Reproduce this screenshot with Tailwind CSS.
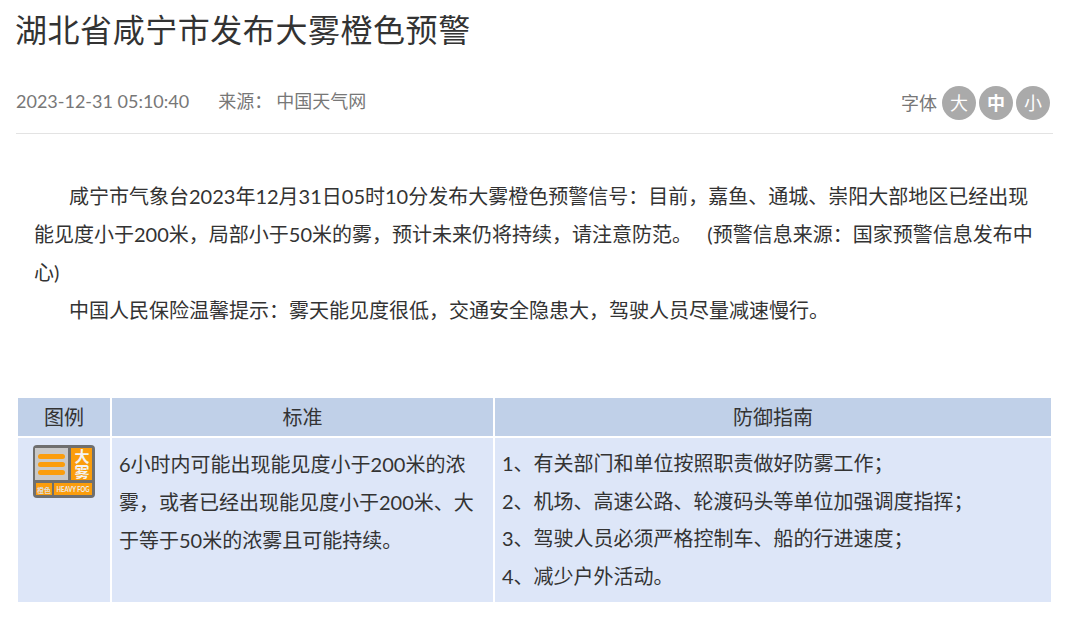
<!DOCTYPE html>
<html lang="zh-CN">
<head>
    <meta charset="UTF-8">
    <title>湖北省咸宁市发布大雾橙色预警</title>
    <script src="https://cdn.jsdelivr.net/npm/@tailwindcss/browser@4"></script>
</head>
<body class="bg-white font-['Lato','Noto_Sans_CJK_SC',sans-serif] overflow-hidden">
    <div class="w-[1076px] h-[625px] pl-[16px] pr-[23px]">
        <h1 class="text-[32px] leading-[32px] pt-[14px] -ml-[1px] text-[#333] font-normal tracking-[0.55px]">湖北省咸宁市发布大雾橙色预警</h1>

        <div class="mt-[23px] h-[65px] flex justify-between items-start border-b border-[#e3e3e3] pt-[12px] w-[1037px]">
            <div class="flex text-[18px] leading-[40px] text-[#777]">
                <span>2023-12-31 05:10:40</span>
                <span class="ml-[29px]">来源：</span>
                <span class="ml-[4px]">中国天气网</span>
            </div>
            <div class="flex items-center gap-[3px] pr-[3px] mt-[5px]">
                <span class="text-[18px] text-[#777] mr-[2px] -ml-[1px]">字体</span>
                <span class="w-[34px] h-[34px] rounded-full bg-[#aaa] text-white text-[18px] flex items-center justify-center">大</span>
                <span class="w-[34px] h-[34px] rounded-full bg-[#aaa] text-white text-[18px] font-bold flex items-center justify-center">中</span>
                <span class="w-[34px] h-[34px] rounded-full bg-[#aaa] text-white text-[18px] flex items-center justify-center">小</span>
            </div>
        </div>

        <div class="mt-[43px] pl-[18px] pr-[17px] text-[20px] leading-[38px] text-[#333]">
            <p class="indent-[35px]">咸宁市气象台2023年12月31日05时10分发布大雾橙色预警信号：目前，嘉鱼、通城、崇阳大部地区已经出现能见度小于200米，局部小于50米的雾，预计未来仍将持续，请注意防范。&nbsp;&nbsp;&nbsp;(预警信息来源：国家预警信息发布中心)</p>
            <p class="indent-[35px]">中国人民保险温馨提示：雾天能见度很低，交通安全隐患大，驾驶人员尽量减速慢行。</p>
        </div>

        <div class="mt-[69px] w-[1033px] ml-[2px] grid grid-cols-[92px_381px_1fr] gap-[2px] text-[20px] text-[#333]">
            <div class="h-[38px] bg-[#c0d0e8] flex items-center justify-center">图例</div>
            <div class="h-[38px] bg-[#c0d0e8] flex items-center justify-center">标准</div>
            <div class="h-[38px] bg-[#c0d0e8] flex items-center justify-center">防御指南</div>

            <div class="h-[164px] bg-[#dde6f8] pt-[7px] pl-[15px]">
                <svg width="62" height="53" viewBox="0 0 62 53">
                    <rect width="62" height="53" rx="4" fill="#6f6f6f"/>
                    <rect x="2" y="3" width="33" height="32" fill="#c9c9c9"/>
                    <rect x="5" y="9" width="27" height="5" rx="2.5" fill="#fb9d0c"/>
                    <rect x="5" y="17" width="27" height="5" rx="2.5" fill="#fb9d0c"/>
                    <rect x="5" y="25" width="27" height="5" rx="2.5" fill="#fb9d0c"/>
                    <rect x="38" y="3" width="21" height="32" fill="#fb9d0c"/>
                    <text x="48.5" y="4" writing-mode="vertical-rl" font-size="15" font-weight="bold" fill="#f3f3f3">大雾</text>
                    <rect x="3" y="38" width="16" height="12" fill="#fb9d0c"/>
                    <text x="11" y="47.5" text-anchor="middle" font-size="7" font-weight="bold" fill="#ddd">橙色</text>
                    <rect x="21" y="38" width="38" height="12" fill="#fb9d0c"/>
                    <text x="40" y="47" text-anchor="middle" font-size="7" font-weight="bold" fill="#eee" textLength="33" lengthAdjust="spacingAndGlyphs">HEAVY FOG</text>
                </svg>
            </div>
            <div class="h-[164px] bg-[#dde6f8] px-[7px] pt-[7px] leading-[38px]">6小时内可能出现能见度小于200米的浓雾，或者已经出现能见度小于200米、大于等于50米的浓雾且可能持续。</div>
            <div class="h-[164px] bg-[#dde6f8] px-[7px] pt-[7px] leading-[37.5px]">
                <p>1、有关部门和单位按照职责做好防雾工作；</p>
                <p>2、机场、高速公路、轮渡码头等单位加强调度指挥；</p>
                <p>3、驾驶人员必须严格控制车、船的行进速度；</p>
                <p>4、减少户外活动。</p>
            </div>
        </div>
    </div>
</body>
</html>
